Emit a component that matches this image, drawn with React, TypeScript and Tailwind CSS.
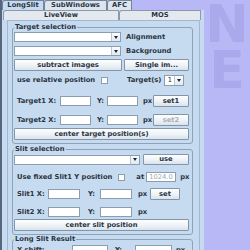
import type { ReactNode } from 'react';

const font = "font-['DejaVu_Sans','Noto_Sans',sans-serif] font-bold";

function Tab({ w, selected, children }: { w: string; selected?: boolean; children: ReactNode }) {
  return (
    <div
      className={`${w} h-[10px] border-t border-l border-r border-[#74859a] rounded-tl-[3px] flex items-center justify-center ${
        selected ? 'bg-[#c6dbef]' : 'bg-[#dce5ee]'
      }`}
    >
      {children}
    </div>
  );
}

function Tab2({ w, children }: { w: string; children: ReactNode }) {
  return (
    <div className={`${w} h-[10px] border-t border-l border-r border-[#8a9aad] rounded-tl-[3px] bg-[#e3e9ef] flex items-center justify-center`}>
      {children}
    </div>
  );
}

function Field({ w, value }: { w: string; value?: string }) {
  return (
    <div className={`${w} h-[10px] shrink-0 bg-white border border-[#8d9db0] flex items-center px-[2px] text-[#9ea7b0] font-normal`}>
      {value}
    </div>
  );
}

function Arrow() {
  return <div className="w-0 h-0 border-l-[2.5px] border-r-[2.5px] border-t-[3px] border-l-transparent border-r-transparent border-t-[#1d2530]" />;
}

function Combo({ w }: { w: string }) {
  return (
    <div className={`${w} h-[10px] shrink-0 bg-white border border-[#8d9db0] flex justify-end`}>
      <div className="w-[9px] border-l border-[#b9c6d3] bg-linear-to-b from-[#fbfdff] to-[#e2e9f0] flex items-center justify-center">
        <Arrow />
      </div>
    </div>
  );
}

function Btn({ className = '', disabled, children }: { className?: string; disabled?: boolean; children: ReactNode }) {
  return (
    <div
      className={`${className} h-[12px] border border-[#8395a8] rounded-[1px] bg-linear-to-b from-[#fdfeff] via-[#eff4f8] to-[#d9e3ec] flex items-center justify-center whitespace-nowrap ${
        disabled ? 'text-[#a9b1ba]' : ''
      }`}
    >
      {children}
    </div>
  );
}

function Check() {
  return <div className="w-[7px] h-[7px] shrink-0 bg-white border border-[#8d9db0]" />;
}

function Group({ title, children }: { title: string; children: ReactNode }) {
  return (
    <fieldset className="w-[181px] border border-[#8da3ba] rounded-[3px] pl-[1px] pr-[3px] pb-[3px] min-w-0">
      <legend className="px-[1px] leading-[8px]">{title}</legend>
      {children}
    </fieldset>
  );
}

export default function App() {
  return (
    <div className={`w-[250px] h-[250px] overflow-hidden flex bg-[#b8b8f7] text-[6.75px] leading-none text-[#2b3442] ${font}`}>
      <div className="w-[204px] shrink-0 flex flex-col border-l-2 border-[#56667d]">
        {/* tab rows */}
        <div className="h-[11px] flex items-end">
          <Tab w="w-[42px]" selected>LongSlit</Tab>
          <Tab w="w-[63px]">SubWindows</Tab>
          <Tab w="w-[25px]">AFC</Tab>
        </div>
        <div className="flex-1 bg-[#c6dbef] flex flex-col">
          <div className="h-[10px] flex pl-[1px] pr-[3px]">
            <Tab2 w="w-[116px]">LiveView</Tab2>
            <Tab2 w="flex-1">MOS</Tab2>
          </div>

          <div className="flex-1 ml-[5px] mr-[4px] border-l border-r border-t border-[#a2b8cf] pl-[4px] pt-[2px]">
            {/* Target selection */}
            <Group title="Target selection">
              <div className="mt-[1px] flex items-center">
                <Combo w="w-[107px]" />
                <span className="ml-[5px]">Alignment</span>
              </div>
              <div className="mt-[4px] flex items-center">
                <Combo w="w-[107px]" />
                <span className="ml-[5px]">Background</span>
              </div>
              <div className="mt-[3px] flex gap-[2px]">
                <Btn className="w-[108px]">subtract images</Btn>
                <Btn className="flex-1">Single im...</Btn>
              </div>
              <div className="mt-[3px] h-[12px] flex items-center">
                <div className="w-[113px] pl-[3px] flex items-center">
                  <span>use relative position</span>
                  <div className="ml-[6px]">
                    <Check />
                  </div>
                </div>
                <span>Target(s)</span>
                <div className="ml-[3px] h-[11px] flex border border-[#8d9db0]">
                  <div className="w-[9px] bg-white flex items-center justify-center font-normal">1</div>
                  <div className="w-[9px] border-l border-[#b9c6d3] bg-linear-to-b from-[#fbfdff] to-[#e2e9f0] flex items-center justify-center">
                    <Arrow />
                  </div>
                </div>
              </div>
              <div className="mt-[9px] h-[12px] flex items-center">
                <span className="w-[46px] pl-[3px] whitespace-nowrap">Target1 X:</span>
                <Field w="w-[31px]" />
                <span className="w-[16px] pl-[6px]">Y:</span>
                <Field w="w-[31px]" />
                <span className="w-[15px] pl-[5px]">px</span>
                <Btn className="flex-1">set1</Btn>
              </div>
              <div className="mt-[7px] h-[12px] flex items-center">
                <span className="w-[46px] pl-[3px] whitespace-nowrap">Target2 X:</span>
                <Field w="w-[31px]" />
                <span className="w-[16px] pl-[6px]">Y:</span>
                <Field w="w-[31px]" />
                <span className="w-[15px] pl-[5px]">px</span>
                <Btn className="flex-1" disabled>set2</Btn>
              </div>
              <Btn className="mt-[2px]">center target position(s)</Btn>
            </Group>

            {/* Slit selection */}
            <div className="mt-[1px]">
              <Group title="Slit selection">
                <div className="mt-[1px] h-[11px] flex items-center">
                  <Combo w="w-[126px]" />
                  <Btn className="ml-[3px] flex-1 !h-[11px]">use</Btn>
                </div>
                <div className="mt-[6px] h-[12px] flex items-center">
                  <span className="pl-[3px] whitespace-nowrap">Use fixed Slit1 Y position</span>
                  <div className="ml-[6px]">
                    <Check />
                  </div>
                  <span className="ml-[11px]">at</span>
                  <Field w="w-[30px] ml-[2px]" value="1024.0" />
                  <span className="ml-[4px]">px</span>
                </div>
                <div className="mt-[5px] h-[12px] flex items-center">
                  <span className="w-[34px] pl-[3px] whitespace-nowrap">Slit1 X:</span>
                  <Field w="w-[32px]" />
                  <span className="w-[20px] pl-[8px]">Y:</span>
                  <Field w="w-[32px]" />
                  <span className="w-[18px] pl-[6px]">px</span>
                  <Btn className="w-[30px]">set</Btn>
                </div>
                <div className="mt-[6px] h-[12px] flex items-center">
                  <span className="w-[34px] pl-[3px] whitespace-nowrap">Slit2 X:</span>
                  <Field w="w-[32px]" />
                  <span className="w-[20px] pl-[8px]">Y:</span>
                  <Field w="w-[32px]" />
                  <span className="w-[18px] pl-[6px]">px</span>
                </div>
                <Btn className="mt-[1px]">center slit position</Btn>
              </Group>
            </div>

            {/* Long Slit Result */}
            <Group title="Long Slit Result">
              <div className="mt-[1px] h-[12px] flex items-center">
                <span className="w-[58px] pl-[3px] whitespace-nowrap">X shift:</span>
                <Field w="w-[36px]" />
                <span className="w-[27px] pl-[7px]">Y:</span>
                <Field w="w-[37px]" />
                <span className="pl-[4px]">px</span>
              </div>
            </Group>
          </div>
        </div>
      </div>

      {/* right side watermark */}
      <div className="flex-1 flex flex-col items-center pt-[4px] gap-[6px] text-[#a9a9eb] text-[52px] leading-[40px]">
        <span>N</span>
        <span>E</span>
      </div>
    </div>
  );
}
